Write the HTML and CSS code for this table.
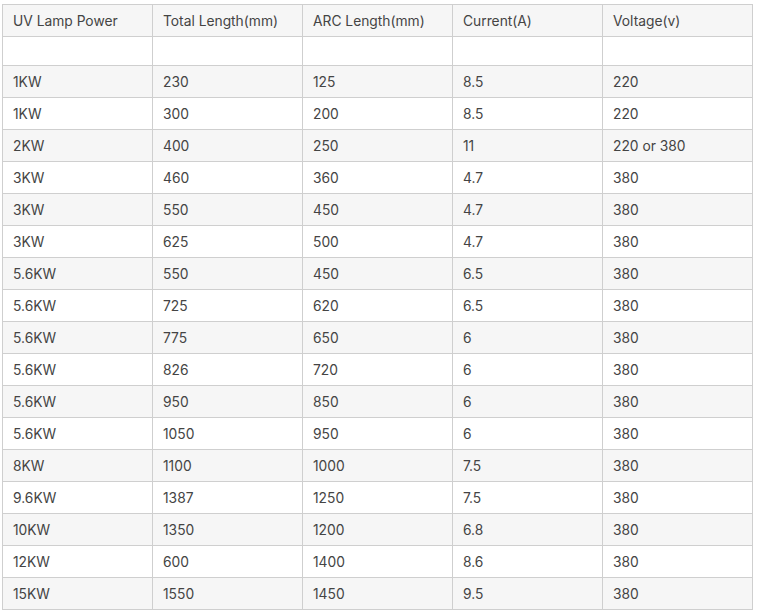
FILE: index.html
```html
<!DOCTYPE html>
<html>
<head>
<meta charset="utf-8">
<link rel="stylesheet" href="styles.css">
</head>
<body>
<table class="spec">
<tr><td>UV Lamp Power</td><td>Total Length(mm)</td><td>ARC Length(mm)</td><td>Current(A)</td><td>Voltage(v)</td></tr>
<tr class="empty"><td></td><td></td><td></td><td></td><td></td></tr>
<tr><td>1KW</td><td>230</td><td>125</td><td>8.5</td><td>220</td></tr>
<tr><td>1KW</td><td>300</td><td>200</td><td>8.5</td><td>220</td></tr>
<tr><td>2KW</td><td>400</td><td>250</td><td>11</td><td>220 or 380</td></tr>
<tr><td>3KW</td><td>460</td><td>360</td><td>4.7</td><td>380</td></tr>
<tr><td>3KW</td><td>550</td><td>450</td><td>4.7</td><td>380</td></tr>
<tr><td>3KW</td><td>625</td><td>500</td><td>4.7</td><td>380</td></tr>
<tr><td>5.6KW</td><td>550</td><td>450</td><td>6.5</td><td>380</td></tr>
<tr><td>5.6KW</td><td>725</td><td>620</td><td>6.5</td><td>380</td></tr>
<tr><td>5.6KW</td><td>775</td><td>650</td><td>6</td><td>380</td></tr>
<tr><td>5.6KW</td><td>826</td><td>720</td><td>6</td><td>380</td></tr>
<tr><td>5.6KW</td><td>950</td><td>850</td><td>6</td><td>380</td></tr>
<tr><td>5.6KW</td><td>1050</td><td>950</td><td>6</td><td>380</td></tr>
<tr><td>8KW</td><td>1100</td><td>1000</td><td>7.5</td><td>380</td></tr>
<tr><td>9.6KW</td><td>1387</td><td>1250</td><td>7.5</td><td>380</td></tr>
<tr><td>10KW</td><td>1350</td><td>1200</td><td>6.8</td><td>380</td></tr>
<tr><td>12KW</td><td>600</td><td>1400</td><td>8.6</td><td>380</td></tr>
<tr><td>15KW</td><td>1550</td><td>1450</td><td>9.5</td><td>380</td></tr>
</table>
</body>
</html>
```
FILE: styles.css
```css
html, body {
  margin: 0;
  padding: 0;
  background: #ffffff;
}
body {
  padding: 4px 0 0 2px;
  font-family: Inter, "Noto Sans", sans-serif;
  font-size: 13.8px;
  color: #444444;
}
.spec {
  border-collapse: collapse;
  table-layout: fixed;
  width: 751px;
}
.spec td {
  width: 150px;
  height: 32px;
  padding: 0 10px;
  border: 1px solid #cfcfcf;
  vertical-align: middle;
  box-sizing: border-box;
  white-space: nowrap;
}
.spec tr:nth-child(odd) td {
  background: #f6f6f6;
}
.spec tr.empty td {
  height: 29px;
}
```
